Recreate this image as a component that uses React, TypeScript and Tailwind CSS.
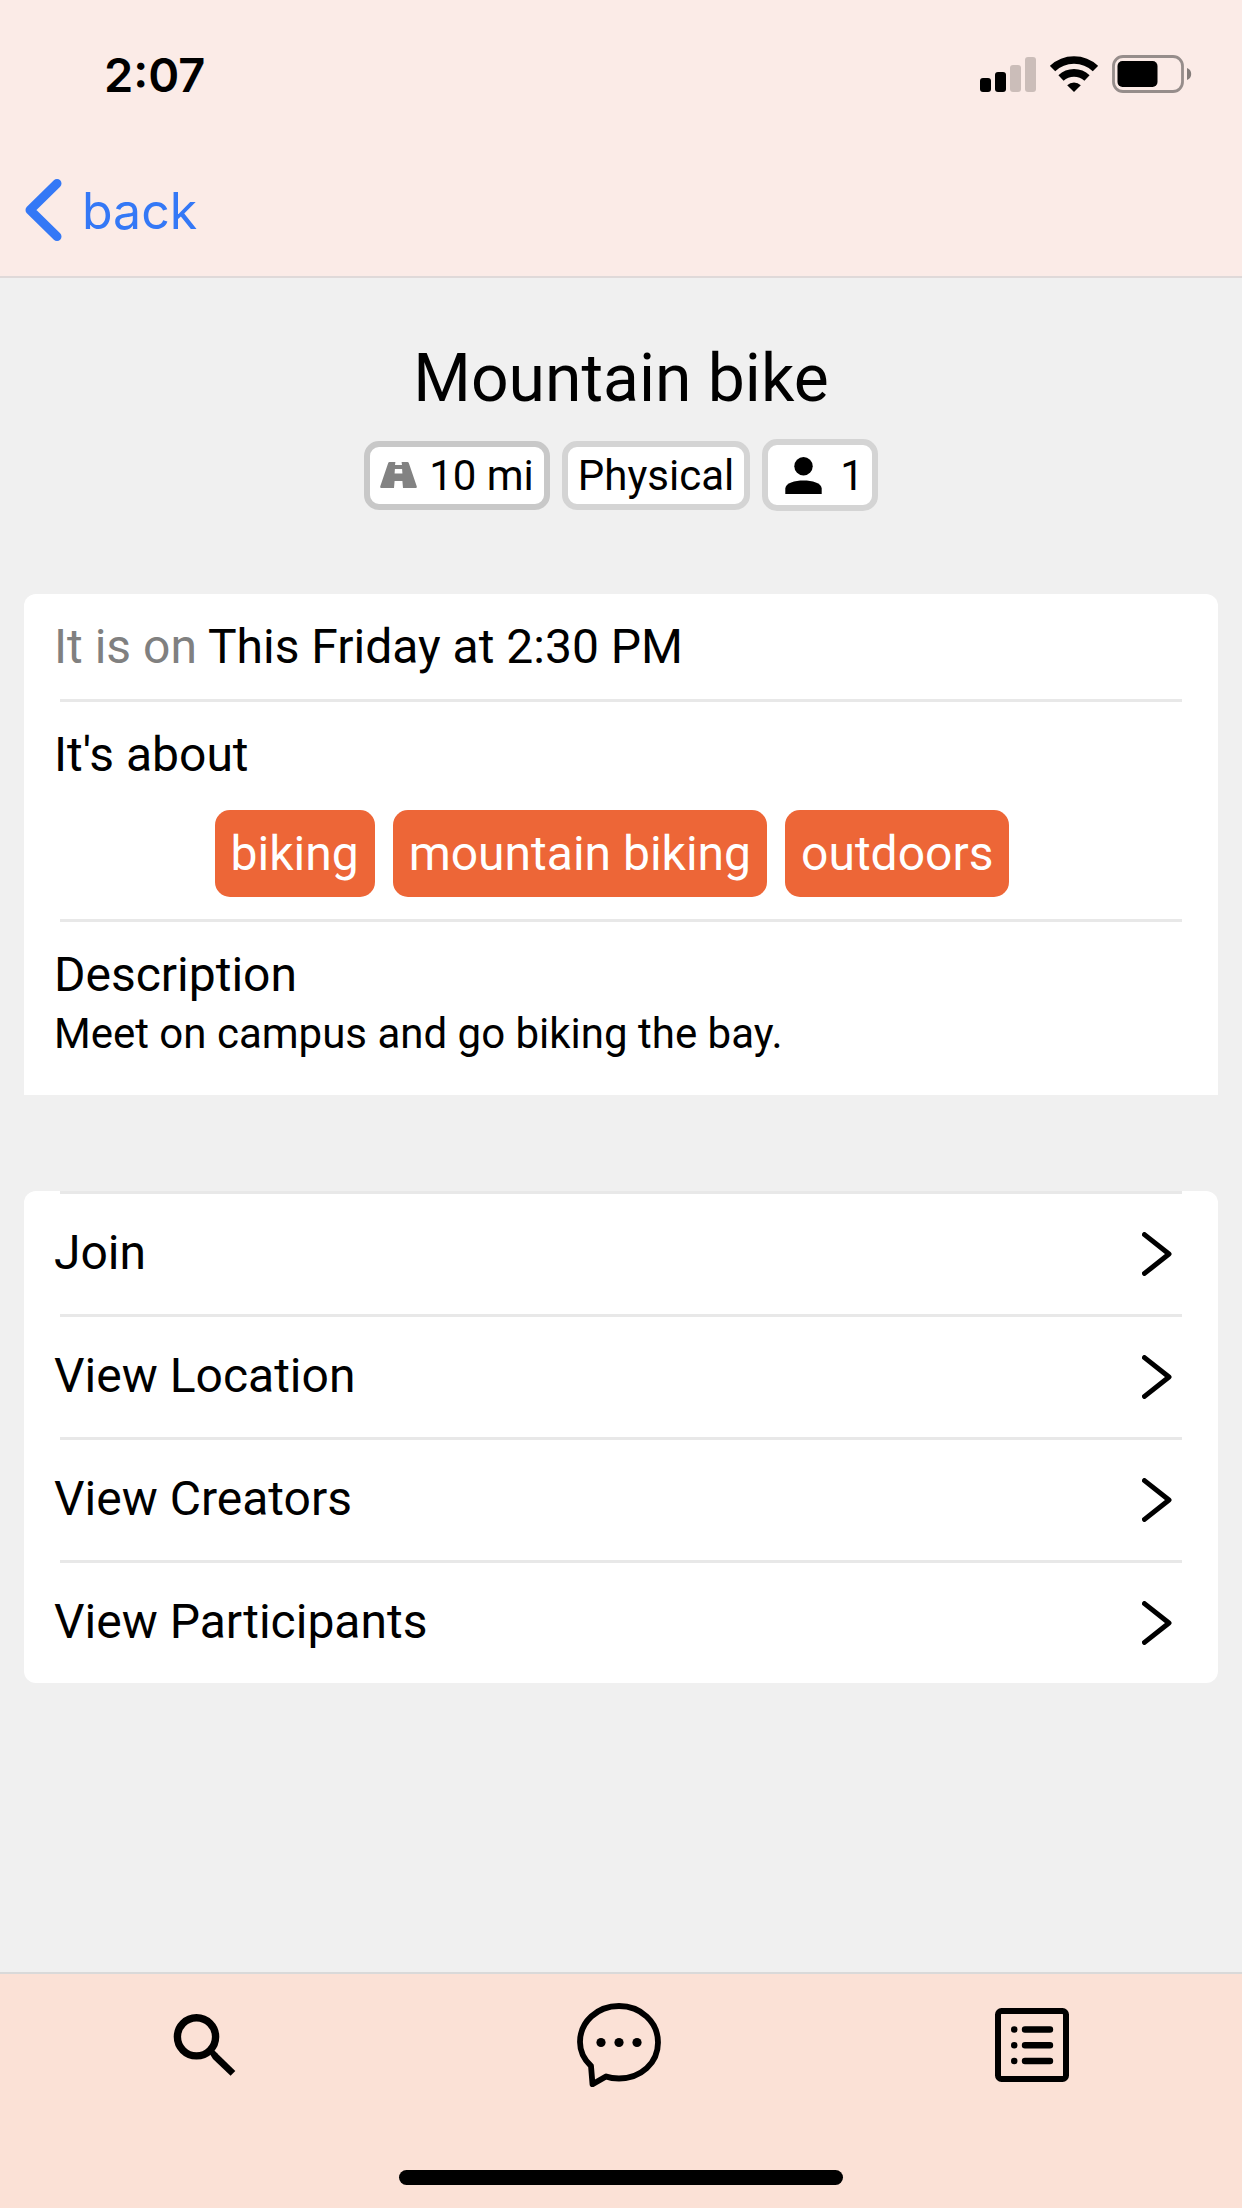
import type { ReactNode } from "react";

function SignalIcon() {
  return (
    <svg className="h-9 w-14" viewBox="0 0 56 36" aria-hidden="true">
      <rect x="0" y="22" width="11" height="14" rx="3" />
      <rect x="15" y="16" width="11" height="20" rx="3" />
      <rect x="30" y="9" width="11" height="27" rx="3" fill="#cbbdb9" />
      <rect x="45" y="1" width="11" height="35" rx="3" fill="#cbbdb9" />
    </svg>
  );
}

function WifiIcon() {
  return (
    <svg className="h-9 w-12" viewBox="0 0 48 36" aria-hidden="true">
      <g fill="none" stroke="#000">
        <path d="M2.6 12.6A31 31 0 0 1 45.4 12.6" strokeWidth="7.6" />
        <path d="M11 22A19 19 0 0 1 37 22" strokeWidth="7.6" />
      </g>
      <path d="M24 36L17.2 29.2A9.8 9.8 0 0 1 30.8 29.2Z" />
    </svg>
  );
}

function BatteryIcon() {
  return (
    <svg className="h-[38px] w-20" viewBox="0 0 80 38" aria-hidden="true">
      <rect x="1.5" y="1.5" width="69" height="35" rx="9.5" fill="none" stroke="#968d8b" strokeWidth="2.8" />
      <rect x="5.5" y="6" width="40" height="26" rx="5" />
      <path d="M75 13A6.4 6.4 0 0 1 75 25Z" fill="#857d7b" />
    </svg>
  );
}

function BackIcon() {
  return (
    <svg className="h-[62px] w-[38px]" viewBox="0 0 38 62" aria-hidden="true">
      <path d="M33 4.5L6 31L33 57.5" fill="none" stroke="#3478f6" strokeWidth="9" strokeLinecap="round" strokeLinejoin="round" />
    </svg>
  );
}

function RoadIcon() {
  return (
    <svg className="h-[26px] w-[37px]" viewBox="0 0 37 26" aria-hidden="true">
      <path
        fill="#828282"
        fillRule="evenodd"
        d="M9.5 0H15.4L15 3H22L21.6 0H27.5Q28.4 0 28.8 1L36.8 24.5Q37 26 35.8 26H23L22.4 19H14.6L14 26H1.2Q0 26 .2 24.5L8.2 1Q8.6 0 9.5 0ZM14.9 7L14.6 11.5H22.4L22.1 7Z"
      />
    </svg>
  );
}

function PersonIcon() {
  return (
    <svg className="size-[37px]" viewBox="0 0 37 37" aria-hidden="true">
      <circle cx="18.5" cy="9.2" r="9.2" />
      <path d="M.3 37V31.5C.3 26 10 23.4 18.5 23.4S36.7 26 36.7 31.5V37Z" />
    </svg>
  );
}

function ChevronIcon() {
  return (
    <svg className="h-[44px] w-[30px]" viewBox="0 0 30 44" aria-hidden="true">
      <path d="M2.5 2.6L27 22L2.5 41.4" fill="none" stroke="#000" strokeWidth="5" strokeLinecap="round" strokeLinejoin="round" />
    </svg>
  );
}

function SearchIcon() {
  return (
    <svg className="size-[68px]" viewBox="0 0 68 68" aria-hidden="true">
      <circle cx="24.5" cy="25.8" r="19.1" fill="none" stroke="#000" strokeWidth="7.4" />
      <path d="M37.3 42L41.8 41.3L45.8 43L63.3 60L58.6 64.8L41 48Z" />
      <path d="M37.8 38.5L44 44.5" stroke="#000" strokeWidth="5" />
    </svg>
  );
}

function ChatIcon() {
  return (
    <svg className="size-[84px]" viewBox="0 0 84 84" aria-hidden="true">
      <path
        d="M14 63C7 56.5 3 48 3 39C3 19 20 3 42 3S81 19 81 39.5S64 75.5 42 75.5C37.5 75.5 33 75 29 73.5L15.5 81.3Z"
        fill="none"
        stroke="#000"
        strokeWidth="5.8"
        strokeLinejoin="round"
      />
      <circle cx="24" cy="39.5" r="4.6" />
      <circle cx="42" cy="39.5" r="4.6" />
      <circle cx="60" cy="39.5" r="4.6" />
    </svg>
  );
}

function ListIcon() {
  return (
    <svg className="size-[74px]" viewBox="0 0 74 74" aria-hidden="true">
      <rect x="3" y="3" width="68" height="68" rx="3.5" fill="none" stroke="#000" strokeWidth="6" />
      <g stroke="#000" strokeWidth="6.4" strokeLinecap="round">
        <path d="M30 21.5H55M30 37.3H55M30 53H55" />
        <path d="M19.2 21.5H19.3M19.2 37.3H19.3M19.2 53H19.3" />
      </g>
    </svg>
  );
}

function Divider() {
  return <div className="mx-9 h-[3px] bg-[#e8e8e8]" />;
}

function Tab({ label, children }: { label: string; children: ReactNode }) {
  return (
    <button type="button" aria-label={label} className="flex h-[142px] flex-1 items-center justify-center">
      {children}
    </button>
  );
}

const tags = ["biking", "mountain biking", "outdoors"];
const actions = ["Join", "View Location", "View Creators", "View Participants"];

export default function App() {
  return (
    <div className="flex min-h-screen flex-col bg-[#f0f0f0] font-['Roboto',sans-serif] text-black">
      <header className="border-b-2 border-[#dfd9d9] bg-[#fbebe7]">
        <div className="flex h-[148px] items-center justify-between pr-[50px] pl-[104px] font-['Inter',sans-serif]">
          <span className="pt-0.5 text-[47px] leading-[58px] font-semibold">2:07</span>
          <div className="flex items-center">
            <SignalIcon />
            <div className="ml-3.5">
              <WifiIcon />
            </div>
            <div className="ml-3.5">
              <BatteryIcon />
            </div>
          </div>
        </div>
        <div className="h-32 pt-[30px] pl-6">
          <button type="button" className="flex items-center gap-5 font-['Inter',sans-serif] text-[50px] leading-[62px] text-[#3478f6]">
            <BackIcon />
            <span className="pt-0.5">back</span>
          </button>
        </div>
      </header>

      <main className="flex-1 px-6 pt-[61px] pb-12">
        <h1 className="text-center text-[66px] leading-[80px]">Mountain bike</h1>
        <div className="mt-5 flex items-center justify-center gap-3 text-[42px] leading-[57px]">
          <span className="flex items-center gap-3 rounded-[15px] border-6 border-[#c8c8c8] bg-white px-2.5">
            <RoadIcon />
            10 mi
          </span>
          <span className="rounded-[15px] border-6 border-[#d4d4d4] bg-white px-2.5">Physical</span>
          <span className="flex h-[72px] items-center gap-[18px] rounded-[15px] border-6 border-[#d4d4d4] bg-white pr-2 pl-[17px]">
            <PersonIcon />1
          </span>
        </div>

        <section className="mt-[83px] rounded-t-xl bg-white pb-9 text-[48px] leading-[57px]">
          <p className="px-[30px] py-6">
            <span className="text-[#808080]">It is on </span>
            This Friday at 2:30 PM
          </p>
          <Divider />
          <h2 className="px-[30px] pt-6">It's about</h2>
          <div className="flex flex-wrap justify-center pt-[27px] pb-[22px]">
            {tags.map((tag) => (
              <span key={tag} className="mr-[18px] rounded-[15px] bg-[#ed6637] px-4 py-[15px] text-white">
                {tag}
              </span>
            ))}
          </div>
          <Divider />
          <h2 className="px-[30px] pt-6">Description</h2>
          <p className="mt-1.5 px-[30px] text-[42px] leading-[50px]">Meet on campus and go biking the bay.</p>
        </section>

        <section className="mt-24 rounded-xl bg-white">
          {actions.map((action) => (
            <div key={action}>
              <Divider />
              <button
                type="button"
                className="flex h-[120px] w-full items-center justify-between pr-[46px] pl-[30px] text-left text-[48px] leading-[57px]"
              >
                <span className="pb-1">{action}</span>
                <ChevronIcon />
              </button>
            </div>
          ))}
        </section>
      </main>

      <footer className="border-t-2 border-[#d9d9d9] bg-[#fbe1d6]">
        <nav className="flex pr-1">
          <Tab label="Search">
            <SearchIcon />
          </Tab>
          <Tab label="Chat">
            <ChatIcon />
          </Tab>
          <Tab label="Events">
            <ListIcon />
          </Tab>
        </nav>
        <div className="flex justify-center pt-[54px] pb-[23px]">
          <div className="h-[15px] w-[444px] rounded-full bg-black" />
        </div>
      </footer>
    </div>
  );
}
